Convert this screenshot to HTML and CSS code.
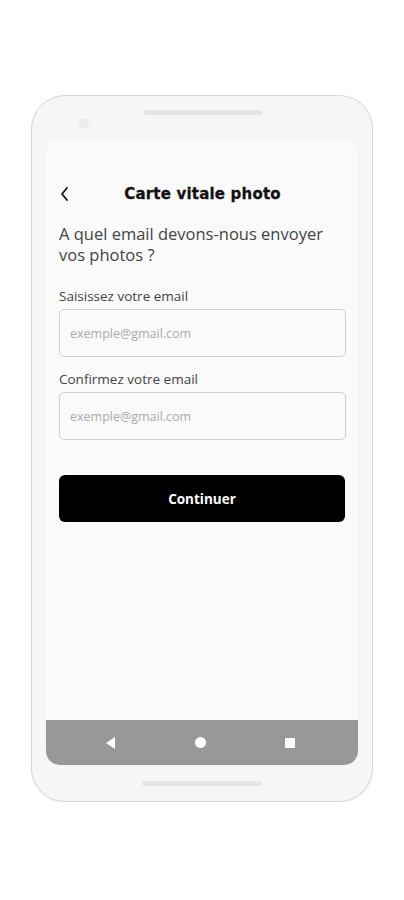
FILE: index.html
```html
<!DOCTYPE html>
<html lang="fr">
<head>
  <meta charset="UTF-8" />
  <meta name="viewport" content="width=device-width, initial-scale=1" />
  <title>Carte vitale photo</title>
  <link rel="stylesheet" href="styles.css">
</head>
<body>

  <div class="phone">
    <div class="phone-top">
      <span class="camera"></span>
      <span class="speaker"></span>
    </div>

    <div class="screen">
      <div class="content">
        <div class="header">
          <svg class="back" width="12" height="16" viewBox="0 0 12 16">
            <path d="M8 2 L3 8 L8 14" fill="none" stroke="#111" stroke-width="1.8" stroke-linecap="round" stroke-linejoin="round"/>
          </svg>
          <h1>Carte vitale photo</h1>
        </div>

        <p class="question">A quel email devons-nous envoyer vos photos ?</p>

        <label for="email">Saisissez votre email</label>
        <input type="email" id="email" placeholder="exemple@gmail.com" />

        <label for="confirm">Confirmez votre email</label>
        <input type="email" id="confirm" placeholder="exemple@gmail.com" />

        <button class="continue">Continuer</button>
      </div>

      <div class="navbar">
        <span class="nav-back"></span>
        <span class="nav-home"></span>
        <span class="nav-recent"></span>
      </div>
    </div>

    <div class="phone-bottom">
      <span class="home-bar"></span>
    </div>
  </div>

</body>
</html>
```

FILE: styles.css
```css
body {
  margin: 0;
  background: #fff;
  font-family: 'Open Sans', 'Liberation Sans', sans-serif;
}
.phone {
  width: 340px;
  height: 705px;
  margin: 95px 0 0 31px;
  border: 1.5px solid #d6d6d6;
  border-radius: 34px;
  background: #f6f6f6;
  display: flex;
  flex-direction: column;
  align-items: center;
  box-shadow: 0 1px 2px rgba(0,0,0,0.06);
}
.phone-top {
  position: relative;
  width: 100%;
  height: 42px;
}
.camera {
  position: absolute;
  left: 46px;
  top: 22px;
  width: 11px;
  height: 11px;
  border-radius: 50%;
  background: #ebebeb;
}
.speaker {
  position: absolute;
  left: 112px;
  top: 14px;
  width: 118px;
  height: 5px;
  border-radius: 3px;
  background: #e4e4e4;
}
.screen {
  width: 312px;
  height: 627px;
  background: #fafafa;
  border-radius: 12px 12px 14px 14px;
  display: flex;
  flex-direction: column;
  overflow: hidden;
  box-shadow: 0 0 1px rgba(0,0,0,0.08);
}
.content {
  flex: 1;
  padding: 45px 12px 0 13px;
}
.header {
  display: flex;
  align-items: center;
  height: 22px;
}
.header h1 {
  flex: 1;
  margin: 0 0 0 -12px;
  text-align: center;
  font-family: 'DejaVu Sans', 'Liberation Sans', sans-serif;
  font-size: 15px;
  font-weight: 700;
  color: #111;
  letter-spacing: 0.2px;
  -webkit-text-stroke: 0.3px #111;
}
.question {
  margin: 18px 0 22px;
  font-size: 16.5px;
  line-height: 21px;
  color: #444;
  font-weight: 400;
}
label {
  display: block;
  font-size: 13.5px;
  color: #444;
  margin-bottom: 4px;
}
input {
  display: block;
  box-sizing: border-box;
  width: 287px;
  height: 48px;
  margin: 0 0 13px;
  padding: 0 10px;
  border: 1px solid #cfcfcf;
  border-radius: 5px;
  background: #fafafa;
  font-family: inherit;
  font-size: 12.5px;
  color: #333;
}
input::placeholder {
  color: #aaa;
}
.continue {
  display: block;
  width: 286px;
  height: 47px;
  margin-top: 35px;
  border: none;
  border-radius: 6px;
  background: #000;
  color: #fff;
  font-family: inherit;
  font-size: 13.5px;
  font-weight: 700;
  cursor: pointer;
}
.navbar {
  height: 45px;
  background: #989898;
  display: flex;
  align-items: center;
  justify-content: space-between;
  padding: 0 63px 0 60px;
}
.nav-back {
  width: 0;
  height: 0;
  border-top: 6px solid transparent;
  border-bottom: 6px solid transparent;
  border-right: 9px solid #fff;
}
.nav-home {
  width: 11px;
  height: 11px;
  border-radius: 50%;
  background: #fff;
}
.nav-recent {
  width: 10px;
  height: 10px;
  background: #fff;
  border-radius: 1px;
}
.phone-bottom {
  flex: 1;
  width: 100%;
  display: flex;
  justify-content: center;
  align-items: center;
}
.home-bar {
  width: 120px;
  height: 5px;
  border-radius: 3px;
  background: #e6e6e6;
}
```
